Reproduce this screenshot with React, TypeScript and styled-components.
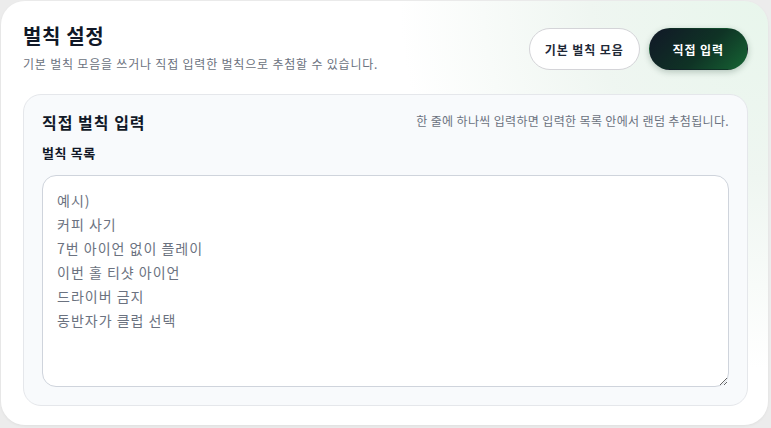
import React from 'react';
import styled, {createGlobalStyle} from 'styled-components';

const FONT = `"Noto Sans CJK KR", "Noto Sans", sans-serif`;

const GlobalStyle = createGlobalStyle`
  html, body {
    margin: 0;
    padding: 0;
    background: #ececec;
  }
  body {
    font-family: ${FONT};
  }
  * {
    box-sizing: border-box;
  }
`;

const Page = styled.div`
  padding: 1px 3px 3px 1px;
  width: 771px;
  height: 428px;
`;

const Card = styled.section`
  height: 424px;
  border-radius: 24px;
  background: radial-gradient(circle at 100% 0%, #e8f6ec 0%, rgba(240, 250, 243, 0.7) 20%, #ffffff 42%);
  box-shadow: 0 1px 3px rgba(0, 0, 0, 0.06);
  padding: 20px 20px 20px 22px;
  display: flex;
  flex-direction: column;
  gap: 22px;
`;

const Header = styled.header`
  display: flex;
  justify-content: space-between;
  align-items: flex-start;
`;

const TitleBlock = styled.div`
  display: flex;
  flex-direction: column;
  gap: 5px;
  padding-top: 1px;
`;

const Title = styled.h1`
  margin: 0;
  font-size: 20px;
  font-weight: 700;
  line-height: 28px;
  letter-spacing: 0.6px;
  color: #111827;
`;

const Subtitle = styled.p`
  margin: 0;
  font-size: 12px;
  line-height: 17px;
  letter-spacing: 0.8px;
  color: #6b7280;
`;

const ButtonRow = styled.div`
  display: flex;
  gap: 9px;
  padding-top: 7px;
`;

const ModeButton = styled.button<{$active?: boolean}>`
  height: 42px;
  border-radius: 21px;
  padding: 0 ${({$active}) => ($active ? 23 : 15)}px;
  font-family: ${FONT};
  font-size: 12px;
  font-weight: 700;
  letter-spacing: 0.9px;
  cursor: pointer;
  border: 1px solid ${({$active}) => ($active ? 'transparent' : '#d4d4d8')};
  color: ${({$active}) => ($active ? '#ffffff' : '#1f2937')};
  background: ${({$active}) =>
    $active ? 'linear-gradient(135deg, #111827 0%, #0f3325 55%, #166534 100%)' : '#ffffff'};
  box-shadow: ${({$active}) => ($active ? '0 2px 6px rgba(15, 51, 37, 0.25)' : 'none')};
`;

const Panel = styled.div`
  flex: 1;
  border-radius: 18px;
  background: #f8fafc;
  border: 1px solid #e5e7eb;
  padding: 15px 18px 18px 18px;
  display: flex;
  flex-direction: column;
`;

const PanelHead = styled.div`
  display: flex;
  justify-content: space-between;
  align-items: center;
`;

const PanelTitle = styled.h2`
  margin: 0;
  font-size: 16px;
  font-weight: 600;
  line-height: 24px;
  letter-spacing: 1px;
  color: #111827;
`;

const Hint = styled.span`
  font-size: 12px;
  color: #6b7280;
  line-height: 18px;
  letter-spacing: 0.35px;
  margin-top: -2px;
`;

const FieldLabel = styled.label`
  margin-top: 10px;
  font-size: 13px;
  font-weight: 700;
  line-height: 18px;
  letter-spacing: 0.6px;
  color: #111827;
`;

const ListInput = styled.textarea`
  margin-top: 13px;
  height: 212px;
  width: 100%;
  border-radius: 14px;
  border: 1px solid #cfd4dc;
  background: #ffffff;
  padding: 12px 14px;
  font-family: ${FONT};
  font-size: 14px;
  line-height: 24px;
  letter-spacing: 1px;
  color: #374151;
  resize: vertical;
  outline: none;

  &::placeholder {
    color: #6b7280;
  }
`;

const examples = ['예시)', '커피 사기', '7번 아이언 없이 플레이', '이번 홀 티샷 아이언', '드라이버 금지', '동반자가 클럽 선택'];

export default function App() {
  return (
    <>
      <GlobalStyle />
      <Page>
        <Card>
          <Header>
            <TitleBlock>
              <Title>벌칙 설정</Title>
              <Subtitle>기본 벌칙 모음을 쓰거나 직접 입력한 벌칙으로 추첨할 수 있습니다.</Subtitle>
            </TitleBlock>
            <ButtonRow>
              <ModeButton>기본 벌칙 모음</ModeButton>
              <ModeButton $active>직접 입력</ModeButton>
            </ButtonRow>
          </Header>
          <Panel>
            <PanelHead>
              <PanelTitle>직접 벌칙 입력</PanelTitle>
              <Hint>한 줄에 하나씩 입력하면 입력한 목록 안에서 랜덤 추첨됩니다.</Hint>
            </PanelHead>
            <FieldLabel htmlFor="penalty-list">벌칙 목록</FieldLabel>
            <ListInput id="penalty-list" placeholder={examples.join('\n')} />
          </Panel>
        </Card>
      </Page>
    </>
  );
}
